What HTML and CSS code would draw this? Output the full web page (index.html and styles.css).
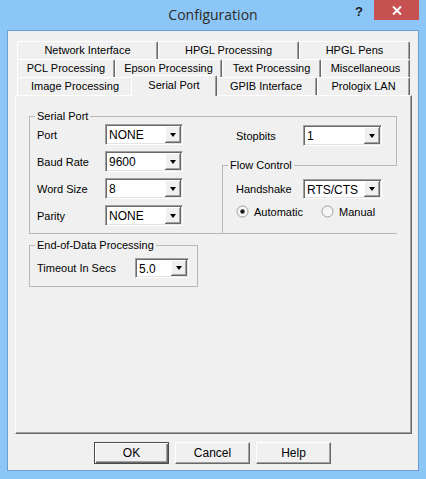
FILE: index.html
```html
<!DOCTYPE html>
<html>
<head>
<meta charset="utf-8">
<title>Configuration</title>
<link rel="stylesheet" href="styles.css">
</head>
<body>
<div class="window">
  <div class="titlebar">
    <div></div>
    <div class="title">Configuration</div>
    <div class="caption-btns">
      <span class="help">?</span>
      <span class="close"><svg width="10" height="9" viewBox="0 0 10 9"><path d="M1 0.5 L9 8.5 M9 0.5 L1 8.5" stroke="#fff" stroke-width="2"/></svg></span>
    </div>
  </div>
  <div class="client">
    <div class="tabs">
      <div class="tabrow">
        <div class="tab t-net">Network Interface</div>
        <div class="tab t-hpgl">HPGL Processing</div>
        <div class="tab t-pens">HPGL Pens</div>
      </div>
      <div class="tabrow">
        <div class="tab t-pcl">PCL Processing</div>
        <div class="tab t-epson">Epson Processing</div>
        <div class="tab t-text">Text Processing</div>
        <div class="tab t-misc">Miscellaneous</div>
      </div>
      <div class="tabrow">
        <div class="tab t-image">Image Processing</div>
        <div class="tab sel">Serial Port</div>
        <div class="tab t-gpib">GPIB Interface</div>
        <div class="tab t-lan">Prologix LAN</div>
      </div>
    </div>
    <div class="panel">
      <fieldset class="group serial">
        <legend>Serial Port</legend>
        <div class="serial-body">
          <div class="col-left">
            <div class="row"><span class="lbl w68">Port</span><div class="combo c78"><span class="val">NONE</span><span class="drop"></span></div></div>
            <div class="row"><span class="lbl w68">Baud Rate</span><div class="combo c78"><span class="val">9600</span><span class="drop"></span></div></div>
            <div class="row"><span class="lbl w68">Word Size</span><div class="combo c78"><span class="val">8</span><span class="drop"></span></div></div>
            <div class="row"><span class="lbl w68">Parity</span><div class="combo c78"><span class="val">NONE</span><span class="drop"></span></div></div>
          </div>
          <div class="col-right">
            <div class="row stop"><span class="lbl w67">Stopbits</span><div class="combo c79"><span class="val">1</span><span class="drop"></span></div></div>
            <fieldset class="group flow">
              <legend>Flow Control</legend>
              <div class="row hand"><span class="lbl w67">Handshake</span><div class="combo c79 h20"><span class="val">RTS/CTS</span><span class="drop"></span></div></div>
              <div class="radios">
                <label class="radio auto"><svg width="13" height="13" viewBox="0 0 13 13"><circle cx="6.5" cy="6.5" r="5.5" fill="#f6f6f6" stroke="#9b9b9b"/><circle cx="6.5" cy="6.5" r="2.2" fill="#1c1c1c"/></svg><span>Automatic</span></label>
                <label class="radio"><svg width="13" height="13" viewBox="0 0 13 13"><circle cx="6.5" cy="6.5" r="5.5" fill="#f6f6f6" stroke="#9b9b9b"/></svg><span>Manual</span></label>
              </div>
            </fieldset>
          </div>
        </div>
      </fieldset>
      <fieldset class="group eod">
        <legend>End-of-Data Processing</legend>
        <div class="row timeout"><span class="lbl w98">Timeout In Secs</span><div class="combo c54 h20"><span class="val">5.0</span><span class="drop"></span></div></div>
      </fieldset>
    </div>
    <div class="buttons">
      <div class="btn default">OK</div>
      <div class="btn">Cancel</div>
      <div class="btn">Help</div>
    </div>
  </div>
</div>
</body>
</html>
```
FILE: styles.css
```css
html, body {
  margin: 0;
  padding: 0;
}
body {
  font-family: "Liberation Sans", Arial, sans-serif;
  font-size: 11px;
  color: #000;
  background: #8cc6f6;
}
.window {
  width: 426px;
  height: 479px;
  background: #8cc6f6;
  box-sizing: border-box;
  display: flex;
  flex-direction: column;
}
.titlebar {
  height: 30px;
  display: grid;
  grid-template-columns: 1fr auto 1fr;
}
.title {
  font-family: "Open Sans", "Noto Sans", sans-serif;
  font-size: 14px;
  color: #2b2b2b;
  line-height: 30px;
}
.caption-btns {
  display: flex;
  justify-content: flex-end;
  align-items: flex-start;
}
.help {
  font-weight: bold;
  font-size: 13px;
  color: #222;
  margin-top: 4px;
  margin-right: 11px;
}
.close {
  width: 45px;
  height: 20px;
  background: #c75050;
  margin-right: 7px;
  display: flex;
  align-items: center;
  justify-content: center;
}
.client {
  margin: 0 7px;
  height: 441px;
  box-sizing: border-box;
  border: 1px solid #6c9fcd;
  background: #f0f0f0;
  padding: 10px 0 0 7px;
}
.tabs {
  margin-left: 2px;
}
.tabrow {
  display: flex;
  height: 18px;
}
.tab {
  box-sizing: border-box;
  height: 18px;
  border-top: 1px solid #fff;
  border-left: 1px solid #fff;
  border-right: 1px solid #696969;
  box-shadow: inset -1px 0 #a0a0a0;
  border-radius: 2px 2px 0 0;
  text-align: center;
  line-height: 17px;
  white-space: nowrap;
  background: #f0f0f0;
}
.t-net { width: 141px; }
.t-hpgl { width: 141px; }
.t-pens { width: 111px; }
.t-pcl { width: 98px; }
.t-epson { width: 107px; }
.t-text { width: 99px; }
.t-misc { width: 89px; }
.t-image { width: 116px; }
.t-gpib { width: 102px; }
.t-lan { width: 93px; }
.tab.sel {
  width: 86px;
  height: 21px;
  margin: -2px -2px 0;
  position: relative;
  z-index: 1;
  line-height: 19px;
}
.panel {
  width: 397px;
  height: 339px;
  box-sizing: border-box;
  border-top: 1px solid #fff;
  border-left: 1px solid #fff;
  border-right: 1px solid #696969;
  border-bottom: 1px solid #696969;
  box-shadow: inset -1px -1px #a0a0a0;
  padding-left: 13px;
  padding-top: 14px;
}
.group {
  margin: 0;
  padding: 0;
  border: 1px solid #b8b8b8;
  min-width: 0;
  box-sizing: border-box;
}
.group legend {
  padding: 0 2px;
  margin-left: 5px;
  line-height: 13px;
  font-size: 11px;
}
.serial {
  width: 368px;
  height: 124px;
}
.serial-body {
  display: flex;
}
.col-left {
  padding: 1px 0 0 7px;
  display: flex;
  flex-direction: column;
  gap: 6px;
}
.row {
  display: flex;
  align-items: center;
  height: 21px;
}
.lbl {
  white-space: nowrap;
}
.w68 { width: 68px; }
.w67 { width: 67px; }
.w98 { width: 98px; }
.col-right {
  margin-left: 39px;
  margin-right: -1px;
  flex: 1;
  display: flex;
  flex-direction: column;
}
.stop {
  margin-top: 2px;
  padding-left: 14px;
}
.flow {
  margin-top: 13px;
  height: 74px;
  border-right: none;
  border-bottom: none;
  background: #f0f0f0;
}
.hand {
  margin-top: 7px;
  padding-left: 13px;
  height: 20px;
}
.radios {
  display: flex;
  margin-top: 6px;
  padding-left: 13px;
  height: 13px;
  align-items: center;
}
.radio {
  display: flex;
  align-items: center;
  gap: 5px;
}
.radio.auto {
  width: 85px;
}
.combo {
  box-sizing: border-box;
  height: 21px;
  border: 1px solid;
  border-color: #a0a0a0 #fff #fff #a0a0a0;
  box-shadow: inset 1px 1px #696969, inset -1px -1px #e3e3e3;
  background: #fff;
  display: flex;
  align-items: stretch;
}
.c78 { width: 78px; }
.c79 { width: 79px; }
.c54 { width: 54px; }
.combo.h20 { height: 20px; }
.val {
  flex: 1;
  padding-left: 3px;
  padding-top: 1px;
  display: flex;
  align-items: center;
  font-size: 12px;
}
.drop {
  width: 16px;
  margin: 1px 1px 1px 0;
  background: #f0f0f0;
  box-shadow: inset -1px -1px #696969, inset 1px 1px #fff, inset -2px -2px #a0a0a0;
  display: flex;
  align-items: center;
  justify-content: center;
}
.drop::after {
  content: "";
  width: 0;
  height: 0;
  border-left: 3.5px solid transparent;
  border-right: 3.5px solid transparent;
  border-top: 4px solid #000;
  margin-left: -1px;
}
.eod {
  margin-top: 5px;
  width: 169px;
  height: 48px;
}
.timeout {
  margin-top: 6px;
  padding-left: 7px;
  height: 20px;
}
.buttons {
  display: flex;
  gap: 6px;
  margin-top: 8px;
  padding-left: 79px;
}
.btn {
  box-sizing: border-box;
  width: 75px;
  height: 22px;
  border-top: 1px solid #fff;
  border-left: 1px solid #fff;
  border-right: 1px solid #696969;
  border-bottom: 1px solid #696969;
  box-shadow: inset -1px -1px #a0a0a0;
  background: #f0f0f0;
  display: flex;
  align-items: center;
  justify-content: center;
  font-size: 12px;
}
.btn.default {
  border: 1px solid #4a4a4a;
  box-shadow: inset 1px 1px #fff, inset -1px -1px #696969, inset -2px -2px #a0a0a0;
}
```
